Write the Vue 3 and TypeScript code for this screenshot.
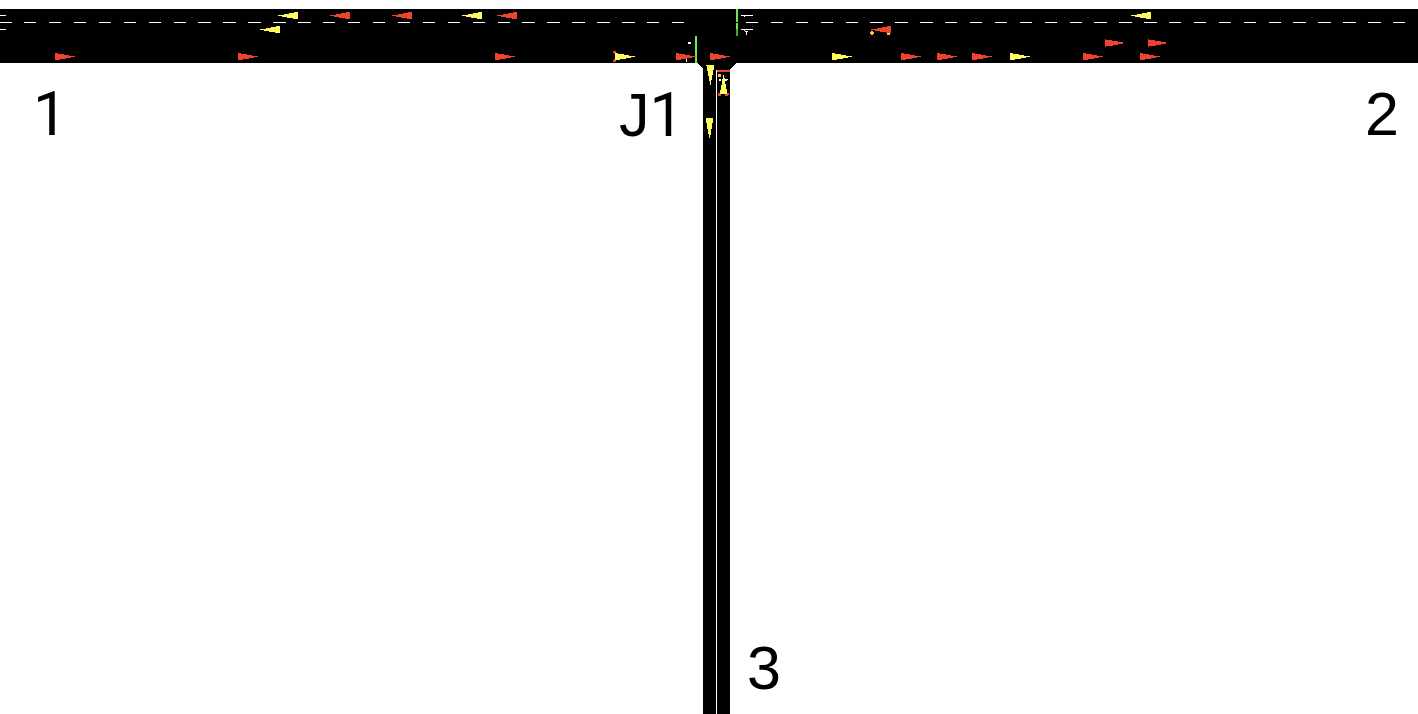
<script setup lang="ts">
type Tone = 'red' | 'yellow'
type Heading = 'east' | 'west' | 'eastMid' | 'south' | 'southNarrow' | 'north'

interface Vehicle {
  x: number
  y: number
  tone: Tone
  heading: Heading
}

interface Dash {
  x: number
  width: number
}

const shapes: Record<Heading, string> = {
  east: 'M0 0h3v1h6v1h5v1h6v1h-4v1h-5v1h-6v1h-5z',
  west: 'M20 0h-4v1h-5v1h-5v1h-6v1h4v1h5v1h6v1h5z',
  eastMid: 'M0 0h1v1h6v1h6v1h5v2h-5v1h-5v1h-7v1h-1z',
  south: 'M0 0h8v5h-1v5h-1v5h-1v5h-1v-4h-1v-5h-1v-5h-1v-5h-1z',
  southNarrow: 'M0 0h7v5h-1v6h-1v6h-1v3h-1v-4h-1v-5h-1v-6h-1z',
  north: 'M4 0h1v3h1v6h1v5h1v5h-7v-4h1v-5h1v-6h1z',
}

const row = (y: number, heading: Heading, list: [number, Tone][]): Vehicle[] =>
  list.map(([x, tone]) => ({ x, y, tone, heading }))

const vehicles: Vehicle[] = [
  ...row(12, 'west', [[278, 'yellow'], [330, 'red'], [392, 'red'], [462, 'yellow'], [497, 'red'], [1131, 'yellow']]),
  ...row(26, 'west', [[260, 'yellow'], [871, 'red']]),
  ...row(39, 'eastMid', [[1105, 'red'], [1148, 'red']]),
  ...row(53, 'east', [
    [55, 'red'], [238, 'red'], [495, 'red'], [615, 'yellow'], [676, 'red'], [710, 'red'],
    [832, 'yellow'], [901, 'red'], [937, 'red'], [972, 'red'], [1010, 'yellow'], [1083, 'red'], [1140, 'red'],
  ]),
  ...row(65, 'south', [[706, 'yellow']]),
  ...row(118, 'southNarrow', [[706, 'yellow']]),
  ...row(75, 'north', [[719, 'yellow']]),
]

const dashes = (from: number, to: number): Dash[] =>
  Array.from({ length: 27 }, (_, i) => {
    const start = from + ((to - from) * i) / 26
    const x = Math.round(start)
    return { x, width: Math.round(start + 12.4) - x }
  })

const laneDashes = [...dashes(24, 672), ...dashes(746, 1393)]
</script>

<template>
  <main class="map">
    <svg class="network" viewBox="0 0 1418 714" role="img" aria-label="Junction J1 with roads 1, 2 and 3">
      <g shape-rendering="crispEdges">
        <path class="road" d="M0 9H1418V63H736L730 69V714H703V69L697 63H0z" />

        <g class="marking">
          <rect x="0" y="22" width="12" height="1" />
          <rect v-for="dash in laneDashes" :key="dash.x" :x="dash.x" y="22" :width="dash.width" height="1" />
          <path d="M0 15h6v1h-6zM0 29h6v1h-6z" />
          <path d="M741 15h12v1h-8v1h-1v-1h-3z" />
          <path d="M741 29h12v1h-8v1h-1v-1h-3zM745 31h3v1h-1v3h-1v-3h-1z" />
          <path d="M688 42h3v2h-3zM686 59h1v3h-1z" />
          <rect x="716" y="70" width="1" height="644" />
        </g>

        <path class="go" d="M736 9h2v13h-2zM736 23h2v6h-2zM695 36h2v27h-2z" />
        <rect class="go-minor" x="736" y="29" width="2" height="7" />
        <rect class="red" x="717" y="70" width="13" height="2" />

        <path class="signal" d="M871 31h2v1h1v2h-1v1h-2v-1h-1v-2h1zM887 32h3v3h-3z" />
        <path class="signal" d="M718 74h3v3h-3z" />
        <path class="marking" d="M719 79h2v2h-2zM725 79h3v1h-1v1h-2z" />
        <path class="red" d="M613 51h3v3h-2v-1h-1zM613 60h1v-1h2v3h-3z" />
        <path class="red" d="M718 93h3v3h-3zM725 93h4v2h-1v1h-3z" />

        <path
          v-for="(v, i) in vehicles"
          :key="i"
          :class="v.tone"
          :d="shapes[v.heading]"
          :transform="`translate(${v.x} ${v.y})`"
        />
      </g>

      <g class="label">
        <text class="one" x="33" y="135">1</text>
        <text x="619" y="136">J<tspan class="one">1</tspan></text>
        <text x="1365" y="135">2</text>
        <text x="747" y="689">3</text>
      </g>
    </svg>
  </main>
</template>

<style scoped>
.map {
  background: #fff;
}

.network {
  display: block;
  width: 100%;
  height: auto;
}

.road {
  fill: #000;
}

.marking {
  fill: #fff;
}

.red {
  fill: #f0432d;
}

.yellow {
  fill: #fffb5c;
}

.signal {
  fill: #f8c34a;
}

.go {
  fill: #6dea4b;
}

.go-minor {
  fill: #4ca436;
}

.label {
  fill: #000;
  font-family: "Liberation Sans", Arial, sans-serif;
  font-size: 61px;
}

.one {
  font-family: Roboto, sans-serif;
}
</style>

<style>
body {
  margin: 0;
  background: #fff;
}
</style>
